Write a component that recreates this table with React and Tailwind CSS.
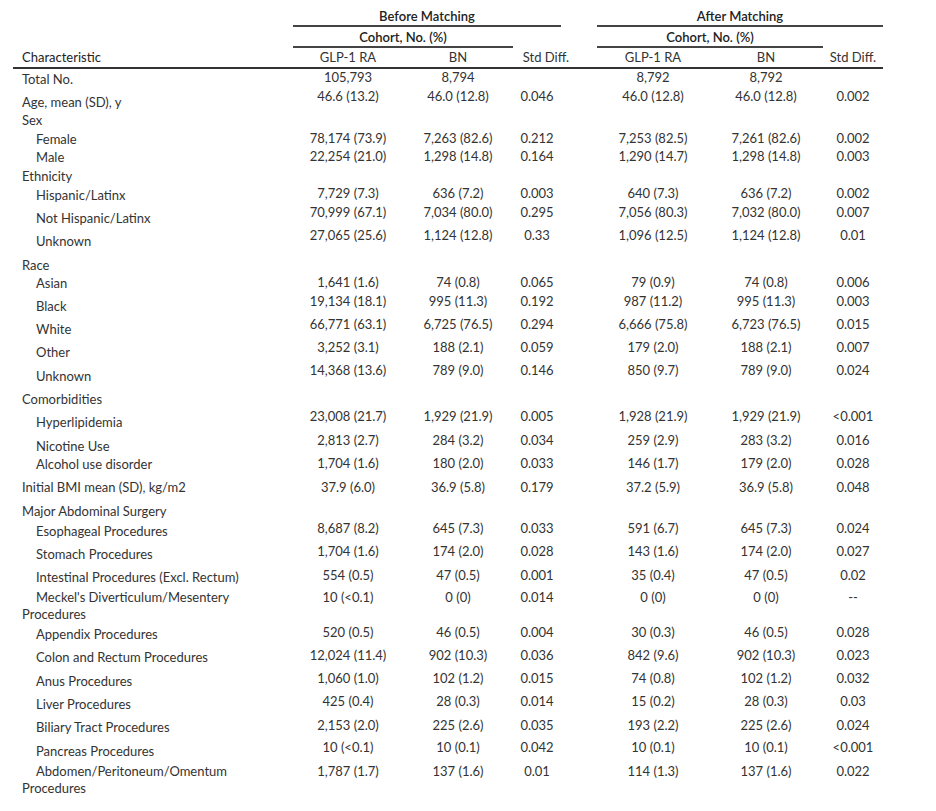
import React from 'react';

// colonnes : libellé | GLP-1 RA | BN | Std Diff | (vide) | GLP-1 RA | BN | Std Diff
const cols = 'grid grid-cols-[280px_110px_110px_48px_36px_112px_114px_60px]';

const rows = [
  { label: 'Total No.', v: ['105,793', '8,794', '', '8,792', '8,792', ''], h: 'h-[19px]', dy: 'pt-[2px]' },
  { label: 'Age, mean (SD), y', v: ['46.6 (13.2)', '46.0 (12.8)', '0.046', '46.0 (12.8)', '46.0 (12.8)', '0.002'], h: 'h-[24px]', dy: 'pt-[6px]' },
  { label: 'Sex', h: 'h-[18px]' },
  { label: 'Female', sub: true, v: ['78,174 (73.9)', '7,263 (82.6)', '0.212', '7,253 (82.5)', '7,261 (82.6)', '0.002'], h: 'h-[18px]', dy: 'pt-[1px]' },
  { label: 'Male', sub: true, v: ['22,254 (21.0)', '1,298 (14.8)', '0.164', '1,290 (14.7)', '1,298 (14.8)', '0.003'], h: 'h-[20px]', dy: 'pt-[1px]' },
  { label: 'Ethnicity', h: 'h-[17px]' },
  { label: 'Hispanic/Latinx', sub: true, v: ['7,729 (7.3)', '636 (7.2)', '0.003', '640 (7.3)', '636 (7.2)', '0.002'], h: 'h-[19px]', dy: 'pt-[2px]' },
  { label: 'Not Hispanic/Latinx', sub: true, v: ['70,999 (67.1)', '7,034 (80.0)', '0.295', '7,056 (80.3)', '7,032 (80.0)', '0.007'], h: 'h-[23px]', dy: 'pt-[6px]' },
  { label: 'Unknown', sub: true, v: ['27,065 (25.6)', '1,124 (12.8)', '0.33', '1,096 (12.5)', '1,124 (12.8)', '0.01'], h: 'h-[30px]', dy: 'pt-[6px]' },
  { label: 'Race', h: 'h-[17px]' },
  { label: 'Asian', sub: true, v: ['1,641 (1.6)', '74 (0.8)', '0.065', '79 (0.9)', '74 (0.8)', '0.006'], h: 'h-[19px]', dy: 'pt-[1px]' },
  { label: 'Black', sub: true, v: ['19,134 (18.1)', '995 (11.3)', '0.192', '987 (11.2)', '995 (11.3)', '0.003'], h: 'h-[23px]', dy: 'pt-[5px]' },
  { label: 'White', sub: true, v: ['66,771 (63.1)', '6,725 (76.5)', '0.294', '6,666 (75.8)', '6,723 (76.5)', '0.015'], h: 'h-[23px]', dy: 'pt-[5px]' },
  { label: 'Other', sub: true, v: ['3,252 (3.1)', '188 (2.1)', '0.059', '179 (2.0)', '188 (2.1)', '0.007'], h: 'h-[23px]', dy: 'pt-[5px]' },
  { label: 'Unknown', sub: true, v: ['14,368 (13.6)', '789 (9.0)', '0.146', '850 (9.7)', '789 (9.0)', '0.024'], h: 'h-[29px]', dy: 'pt-[6px]' },
  { label: 'Comorbidities', h: 'h-[17px]' },
  { label: 'Hyperlipidemia', sub: true, v: ['23,008 (21.7)', '1,929 (21.9)', '0.005', '1,928 (21.9)', '1,929 (21.9)', '<0.001'], h: 'h-[24px]', dy: 'pt-[6px]' },
  { label: 'Nicotine Use', sub: true, v: ['2,813 (2.7)', '284 (3.2)', '0.034', '259 (2.9)', '283 (3.2)', '0.016'], h: 'h-[23px]', dy: 'pt-[6px]' },
  { label: 'Alcohol use disorder', sub: true, v: ['1,704 (1.6)', '180 (2.0)', '0.033', '146 (1.7)', '179 (2.0)', '0.028'], h: 'h-[24px]', dy: 'pt-[1px]' },
  { label: 'Initial BMI mean (SD), kg/m2', v: ['37.9 (6.0)', '36.9 (5.8)', '0.179', '37.2 (5.9)', '36.9 (5.8)', '0.048'], h: 'h-[24px]', dy: 'pt-0' },
  { label: 'Major Abdominal Surgery', h: 'h-[17px]' },
  { label: 'Esophageal Procedures', sub: true, v: ['8,687 (8.2)', '645 (7.3)', '0.033', '591 (6.7)', '645 (7.3)', '0.024'], h: 'h-[23px]', dy: 'pt-[3px]' },
  { label: 'Stomach Procedures', sub: true, v: ['1,704 (1.6)', '174 (2.0)', '0.028', '143 (1.6)', '174 (2.0)', '0.027'], h: 'h-[24px]', dy: 'pt-[3px]' },
  { label: 'Intestinal Procedures (Excl. Rectum)', sub: true, v: ['554 (0.5)', '47 (0.5)', '0.001', '35 (0.4)', '47 (0.5)', '0.02'], h: 'h-[22px]', dy: 'pt-[2px]' },
  { label: "Meckel's Diverticulum/Mesentery", label2: 'Procedures', sub: true, v: ['10 (<0.1)', '0 (0)', '0.014', '0 (0)', '0 (0)', '--'], h: 'h-[35px]', dy: 'pt-0' },
  { label: 'Appendix Procedures', sub: true, v: ['520 (0.5)', '46 (0.5)', '0.004', '30 (0.3)', '46 (0.5)', '0.028'], h: 'h-[23px]', dy: 'pt-[2px]' },
  { label: 'Colon and Rectum Procedures', sub: true, v: ['12,024 (11.4)', '902 (10.3)', '0.036', '842 (9.6)', '902 (10.3)', '0.023'], h: 'h-[23px]', dy: 'pt-[2px]' },
  { label: 'Anus Procedures', sub: true, v: ['1,060 (1.0)', '102 (1.2)', '0.015', '74 (0.8)', '102 (1.2)', '0.032'], h: 'h-[23px]', dy: 'pt-[3px]' },
  { label: 'Liver Procedures', sub: true, v: ['425 (0.4)', '28 (0.3)', '0.014', '15 (0.2)', '28 (0.3)', '0.03'], h: 'h-[24px]', dy: 'pt-[3px]' },
  { label: 'Biliary Tract Procedures', sub: true, v: ['2,153 (2.0)', '225 (2.6)', '0.035', '193 (2.2)', '225 (2.6)', '0.024'], h: 'h-[22px]', dy: 'pt-[2px]' },
  { label: 'Pancreas Procedures', sub: true, v: ['10 (<0.1)', '10 (0.1)', '0.042', '10 (0.1)', '10 (0.1)', '<0.001'], h: 'h-[24px]', dy: 'pt-[4px]' },
  { label: 'Abdomen/Peritoneum/Omentum', label2: 'Procedures', sub: true, v: ['1,787 (1.7)', '137 (1.6)', '0.01', '114 (1.3)', '137 (1.6)', '0.022'], h: 'h-[34px]', dy: 'pt-0' },
];

const Row = ({ row }) => {
  const v = row.v || ['', '', '', '', '', ''];
  return (
    <div className={`${cols} ${row.h}`}>
      <div className={`${row.dy || 'pt-0'} pl-[9px] whitespace-nowrap ${row.sub ? 'indent-[14px]' : ''}`}>
        {row.label}
        {row.label2 && (
          <>
            <br />
            {row.label2}
          </>
        )}
      </div>
      <div className="text-center">{v[0]}</div>
      <div className="text-center">{v[1]}</div>
      <div className="flex justify-center whitespace-nowrap">{v[2]}</div>
      <div />
      <div className="text-center">{v[3]}</div>
      <div className="text-center">{v[4]}</div>
      <div className="flex justify-center whitespace-nowrap">{v[5]}</div>
    </div>
  );
};

const App = () => {
  return (
    <div className="min-h-screen bg-white text-[#333] font-['Lato',sans-serif] text-[13px] leading-[17px]">
      <div className="ml-[13px] w-[870px]">
        {/* en-tête */}
        <div className={cols}>
          <div />
          <div className="col-span-3 h-[27px] pt-[8px] text-center font-semibold text-[#222] border-b-2 border-[#444]">
            Before Matching
          </div>
          <div />
          <div className="col-span-3 h-[27px] pt-[8px] text-center font-semibold text-[#222] border-b-2 border-[#444]">
            After Matching
          </div>
        </div>
        <div className={cols}>
          <div />
          <div className="col-span-2 h-[21px] pt-[2px] text-center font-semibold text-[#222] border-b-2 border-[#444]">
            Cohort, No. (%)
          </div>
          <div />
          <div />
          <div className="col-span-2 h-[21px] pt-[2px] text-center font-semibold text-[#222] border-b-2 border-[#444]">
            Cohort, No. (%)
          </div>
          <div />
        </div>
        <div className={`${cols} h-[21px] pt-[1px] border-b-2 border-[#333]`}>
          <div className="pl-[9px] text-[#222]">Characteristic</div>
          <div className="text-center">GLP-1 RA</div>
          <div className="text-center">BN</div>
          <div className="flex justify-center whitespace-nowrap translate-x-[9px]">Std Diff.</div>
          <div />
          <div className="text-center">GLP-1 RA</div>
          <div className="text-center">BN</div>
          <div className="flex justify-center whitespace-nowrap">Std Diff.</div>
        </div>

        {/* lignes */}
        {rows.map((row, i) => (
          <Row key={i} row={row} />
        ))}
      </div>
    </div>
  );
};

export default App;
